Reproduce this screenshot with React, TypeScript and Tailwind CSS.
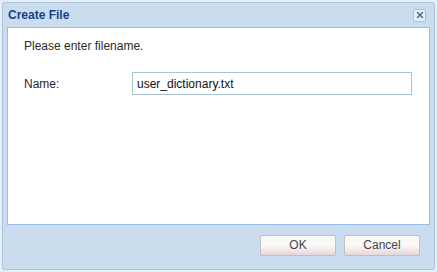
import { X } from "lucide-react";

export default function App() {
  return (
    <div className="w-[437px] h-[272px] bg-[#e6eef6] p-[2px] font-['Liberation_Sans',Arial,sans-serif]">
      <div className="flex h-full flex-col rounded-[3px] border border-[#a9c4de] bg-[#c9ddef] px-[4px] pb-[4px]">
        <div className="flex h-[24px] items-center justify-between pl-[1px] pr-[4px]">
          <span className="text-[12px] font-bold text-[#15428b]">Create File</span>
          <button className="flex h-[13px] w-[13px] items-center justify-center rounded-[2px] border border-[#a6c2de] bg-[#e4eef8]">
            <X className="h-[10px] w-[10px] text-[#4d6b90]" strokeWidth={3.5} />
          </button>
        </div>
        <div className="flex h-[198px] flex-col border border-[#99bbe8] bg-white px-[16px] pt-[9px]">
          <p className="text-[12px] text-[#2a2a2a]">Please enter filename.</p>
          <div className="mt-[17px] flex items-center">
            <label className="w-[108px] text-[12px] text-[#2a2a2a]">Name:</label>
            <input
              className="h-[23px] w-[280px] border border-[#a7c3d6] px-[4px] text-[12px] text-[#111] outline-none"
              defaultValue="user_dictionary.txt"
            />
          </div>
        </div>
        <div className="flex flex-1 items-center justify-end gap-[8px] pr-[10px]">
          <button className="h-[21px] w-[76px] rounded-[2px] border border-[#c8bcbc] bg-gradient-to-b from-[#fbf8f8] from-50% to-[#e4d6d6] text-[12px] text-[#444]">
            OK
          </button>
          <button className="h-[21px] w-[76px] rounded-[2px] border border-[#c8bcbc] bg-gradient-to-b from-[#fbf8f8] from-50% to-[#e4d6d6] text-[12px] text-[#444]">
            Cancel
          </button>
        </div>
      </div>
    </div>
  );
}
